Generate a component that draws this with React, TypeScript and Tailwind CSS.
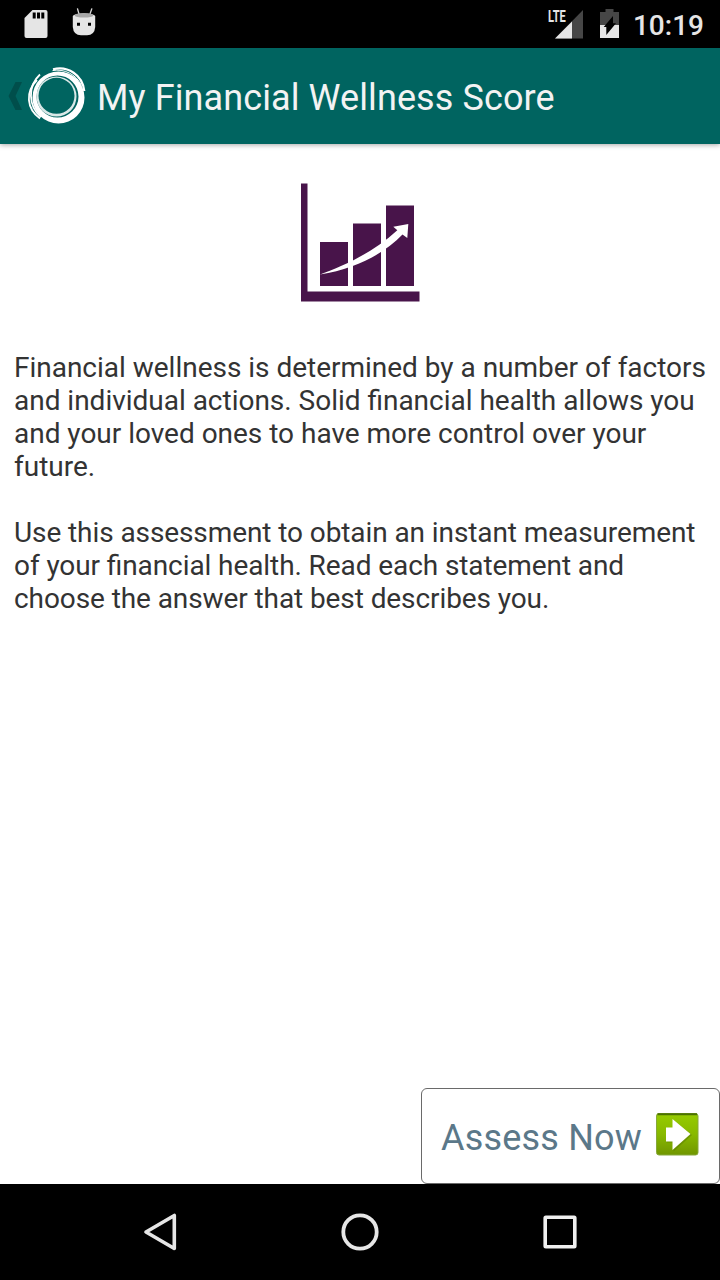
const PARAGRAPHS = [
  {
    tracking: "tracking-[-0.015px]",
    lines: [
      "Financial wellness is determined by a number of factors",
      "and individual actions. Solid financial health allows you",
      "and your loved ones to have more control over your",
      "future.",
    ],
  },
  {
    tracking: "tracking-[-0.09px]",
    lines: [
      "Use this assessment to obtain an instant measurement",
      "of your financial health. Read each statement and",
      "choose the answer that best describes you.",
    ],
  },
];

function SdCardIcon() {
  return (
    <svg className="h-7 w-6" viewBox="0 0 24 28" aria-hidden="true">
      <path d="M8.5 0H21.5Q23.5 0 23.5 2V26Q23.5 28 21.5 28H2.5Q.5 28 .5 26V8Z" fill="#e5e5e5" />
      <path d="M8.7 2.5h3v6h-3zM13 2.5h3v6h-3zM17.3 2.5h3v6h-3z" fill="#000" />
    </svg>
  );
}

function AndroidIcon() {
  return (
    <svg className="h-7 w-6" viewBox="0 0 24 28" aria-hidden="true">
      <path d="M5.5.8 7 6M19.8.8 18 6" stroke="#d8d8d8" strokeWidth="1.3" strokeLinecap="round" />
      <path d="M.8 8Q2 5.5 12 5.5T23.2 8V19Q22.5 27.3 15 27.3H9Q1.5 27.3 .8 19Z" fill="#e5e5e5" />
      <path d="M2.5 7.5Q3 5 12 5T21.5 7.5Q20 9.6 12 9.6T2.5 7.5Z" fill="#a6a6a6" />
      <path d="M5 14.7h3v3H5zM16 14.7h3v3h-3z" fill="#000" />
    </svg>
  );
}

function StatusBar() {
  return (
    <div className="flex h-12 shrink-0 items-center bg-black pl-6 pr-4">
      <SdCardIcon />
      <div className="-mt-1 ml-6">
        <AndroidIcon />
      </div>
      <div className="ml-auto flex h-[30px]">
        <span className="-mr-[19px] w-[19px] text-[16.5px] font-bold leading-4 text-[#e5e5e5]">
          <span className="inline-block origin-left scale-x-[0.67]">LTE</span>
        </span>
        <svg className="ml-[7px] h-[30px] w-7" viewBox="0 0 28 30" aria-hidden="true">
          <path d="M28 1V29.5H0Z" fill="#464646" />
          <path d="M17 12.5V29.5H0Z" fill="#e5e5e5" />
        </svg>
      </div>
      <svg className="ml-[17px] h-[30px] w-5" viewBox="0 0 20 30" aria-hidden="true">
        <path d="M5.5 0h8v3H19v13H0V3h5.5z" fill="#464646" />
        <path d="M0 16h19v13H0z" fill="#e5e5e5" />
        <path d="M13 7V14.2H16L6.3 26V18H3.7Z" fill="#000" />
      </svg>
      <span className="ml-[13px] pt-1 text-[28px] font-medium leading-none text-[#e5e5e5]">
        10:19
      </span>
    </div>
  );
}

function RingLogo() {
  return (
    <svg className="h-[60px] w-[60px]" viewBox="0 0 60 60" fill="none" stroke="#fff" aria-hidden="true">
      {/* main crescent, heavier on the lower right */}
      <path
        d="M6.5 31.5a26 26 0 1 0 52 0a26 26 0 1 0 -52 0ZM10.5 30.5a21 21 0 1 0 42 0a21 21 0 1 0 -42 0Z"
        fill="#fff"
        fillRule="evenodd"
        stroke="none"
      />
      {/* inner crescent, thin at the upper left */}
      <path
        d="M10.5 30.5a20 20 0 1 0 40 0a20 20 0 1 0 -40 0ZM12.5 29.8a18 18 0 1 0 36 0a18 18 0 1 0 -36 0Z"
        fill="#fff"
        fillRule="evenodd"
        stroke="none"
        opacity=".85"
      />
      <path d="M27 3.3C42 -.5 56.5 9 58.3 25" strokeWidth="2.2" />
      <path d="M26.5 4.6C38 2.5 50 8 55.5 19.5" strokeWidth="1" />
      <path d="M11 14C-1 26 .5 43 14 52.5" strokeWidth="1.8" />
      <path d="M14 8.5C1.5 20 2 40 15 51" strokeWidth="1.8" />
    </svg>
  );
}

function Header() {
  return (
    <header className="z-10 flex h-24 shrink-0 items-center bg-[#006460] pl-2 shadow-[0_1px_5px_rgba(0,0,0,0.35)]">
      <svg className="h-7 w-3.5" viewBox="0 0 14 28" aria-hidden="true">
        <path d="M7.5 0H14L7.5 14 14 28H7.5L.5 14Z" fill="#004e4b" />
      </svg>
      <div className="ml-1">
        <RingLogo />
      </div>
      <h1 className="ml-[11px] whitespace-nowrap pt-1 text-[36px] leading-[42px] tracking-[0.1px] text-[#f3f3f3]">
        My Financial Wellness Score
      </h1>
    </header>
  );
}

function GrowthChart() {
  return (
    <svg className="mx-auto mt-[39px] h-[119px] w-[119px]" viewBox="0 0 119 119" aria-hidden="true">
      <path
        d="M0 .5H6.5V108.5H118.5V118.5H0ZM19 59H47V103H19ZM52 40.5H80V103H52ZM85 22.5H113V103H85Z"
        fill="#48144a"
      />
      <path
        d="M19 91.5C42 83 70 71 96.3 47.2L92.3 43.7 107.3 41 106.3 55 101.5 51.5C84 70 55 86 19 91.5Z"
        fill="#fff"
      />
    </svg>
  );
}

function AssessButton() {
  return (
    <button
      type="button"
      className="flex h-24 w-[299px] items-center self-end rounded-[6px] border border-[#6a6a6a] bg-white pl-[19px]"
    >
      <span className="whitespace-nowrap pt-1 text-[36px] leading-[42px] tracking-[0.2px] text-[#5b7889]">
        Assess Now
      </span>
      <svg className="-mt-[3px] ml-auto mr-5 h-[43px] w-[43px]" viewBox="0 0 43 43" aria-hidden="true">
        <defs>
          <linearGradient id="go" x1="0" y1="0" x2="0" y2="1">
            <stop offset="0" stopColor="#96cc00" />
            <stop offset=".5" stopColor="#88b900" />
            <stop offset="1" stopColor="#709600" />
          </linearGradient>
        </defs>
        <rect x=".5" y=".5" width="41.5" height="41.5" rx="2.5" fill="url(#go)" stroke="#86a83a" />
        <path d="M1.5 1.3H41" stroke="#4b7100" strokeWidth="2" />
        <path d="M10.5 15.5H17.5V7L36 22 17.5 38.5V29.5H10.5Z" fill="#506f00" opacity=".4" />
        <path d="M10 14.5H16.5V6L34.5 21 16.5 37V28.5H10Z" fill="#fff" />
      </svg>
    </button>
  );
}

function NavigationBar() {
  return (
    <nav className="flex h-24 shrink-0 items-center justify-center gap-40 bg-black">
      <svg className="h-10 w-10" viewBox="0 0 40 40" fill="none" stroke="#e6e6e6" aria-hidden="true">
        <path d="M34.3 3.5V36.5L6 20Z" strokeWidth="3.6" strokeLinejoin="round" />
      </svg>
      <svg className="h-10 w-10" viewBox="0 0 40 40" fill="none" stroke="#e6e6e6" aria-hidden="true">
        <circle cx="20" cy="20" r="16.7" strokeWidth="3.8" />
      </svg>
      <svg className="h-10 w-10" viewBox="0 0 40 40" fill="none" stroke="#f0f0f0" aria-hidden="true">
        <rect x="5.2" y="5.2" width="29.6" height="29.6" rx=".7" strokeWidth="3.6" />
      </svg>
    </nav>
  );
}

export default function App() {
  return (
    <div className="flex h-[1280px] w-[720px] flex-col overflow-hidden bg-white font-['Roboto',sans-serif]">
      <StatusBar />
      <Header />
      <main className="flex flex-1 flex-col">
        <GrowthChart />
        <div className="mt-[49px] flex flex-1 flex-col gap-[33px] pl-3.5 text-[28px] leading-[33px] text-[#333] [font-feature-settings:'liga'_1]">
          {PARAGRAPHS.map(({ tracking, lines }) => (
            <p key={lines[0]} className={tracking}>
              {lines.map((line) => (
                <span key={line} className="block whitespace-nowrap">
                  {line}
                </span>
              ))}
            </p>
          ))}
        </div>
        <AssessButton />
      </main>
      <NavigationBar />
    </div>
  );
}
